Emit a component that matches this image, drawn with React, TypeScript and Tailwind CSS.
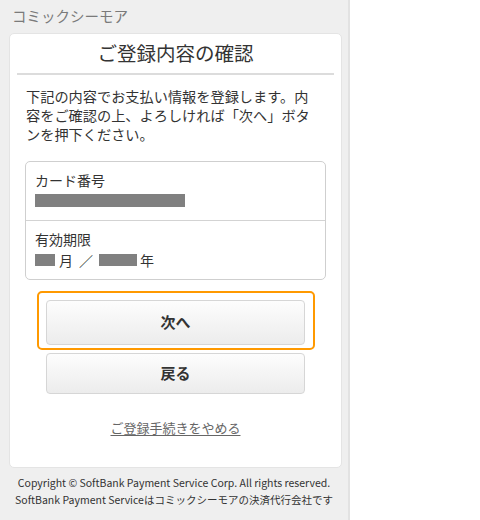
import React from "react";

export default function App() {
  const font = { fontFamily: '"Noto Sans CJK JP", "Noto Sans", sans-serif' };
  return (
    <div className="w-[480px] h-[520px] bg-white" style={font}>
      <div className="w-[350px] h-[520px] bg-[#efefef] border-r-2 border-[#e2e2e2] flex flex-col">
        <div className="h-[33px] pl-[12px] pt-[5px] text-[14.5px] leading-[22px] text-[#7a7a7a]">
          コミックシーモア
        </div>
        <div className="mx-[9px] w-[333px] h-[435px] bg-white rounded-[5px] border border-[#e4e4e4] flex flex-col">
          <div className="pt-[6px] h-[39px] text-center text-[19.5px] leading-[26px] text-[#333]">
            ご登録内容の確認
          </div>
          <div className="mx-[7px] h-[2px] bg-[#dcdcdc]" />
          <p className="mt-[12px] pl-[16px] text-[14.2px] leading-[19px] text-[#333]">
            下記の内容でお支払い情報を登録します。内
            <br />
            容をご確認の上、よろしければ「次へ」ボタ
            <br />
            ンを押下ください。
          </p>
          <div className="mt-[17px] ml-[15px] w-[301px] h-[119px] rounded-[5px] border border-[#cfcfcf] flex flex-col">
            <div className="h-[59px] border-b border-[#d3d3d3] pl-[9px] pt-[8px]">
              <div className="text-[14px] leading-[20px] text-[#333]">カード番号</div>
              <div className="mt-[4px] w-[150px] h-[13px] bg-[#808080]" />
            </div>
            <div className="pl-[9px] pt-[8px]">
              <div className="text-[14px] leading-[20px] text-[#333]">有効期限</div>
              <div className="mt-[3px] flex items-center h-[16px] text-[14px] text-[#333]">
                <div className="w-[20px] h-[12px] bg-[#808080]" />
                <span className="ml-[4px]">月</span>
                <span className="ml-[6px]">／</span>
                <div className="ml-[6px] w-[38px] h-[12px] bg-[#808080]" />
                <span className="ml-[3px]">年</span>
              </div>
            </div>
          </div>
          <div className="mt-[11px] ml-[27px] w-[278px] h-[59px] rounded-[5px] border-2 border-[#ff9900] pt-[7px] pl-[7px]">
            <div className="w-[259px] h-[45px] rounded-[4px] border border-[#d6d6d6] bg-gradient-to-b from-[#fdfdfd] to-[#ececec] flex items-center justify-center text-[15px] font-bold text-[#333]">
              次へ
            </div>
          </div>
          <div className="mt-[3px] ml-[36px] w-[259px] h-[41px] rounded-[4px] border border-[#d6d6d6] bg-gradient-to-b from-[#fdfdfd] to-[#ececec] flex items-center justify-center text-[15px] font-bold text-[#333]">
            戻る
          </div>
          <div className="mt-[25px] text-center text-[13px] leading-[18px] text-[#666] underline underline-offset-2">
            ご登録手続きをやめる
          </div>
        </div>
        <div className="mt-[6px] text-center text-[10.5px] leading-[17px] text-[#333]">
          Copyright © SoftBank Payment Service Corp. All rights reserved.
          <br />
          SoftBank Payment Serviceはコミックシーモアの決済代行会社です
        </div>
      </div>
    </div>
  );
}
